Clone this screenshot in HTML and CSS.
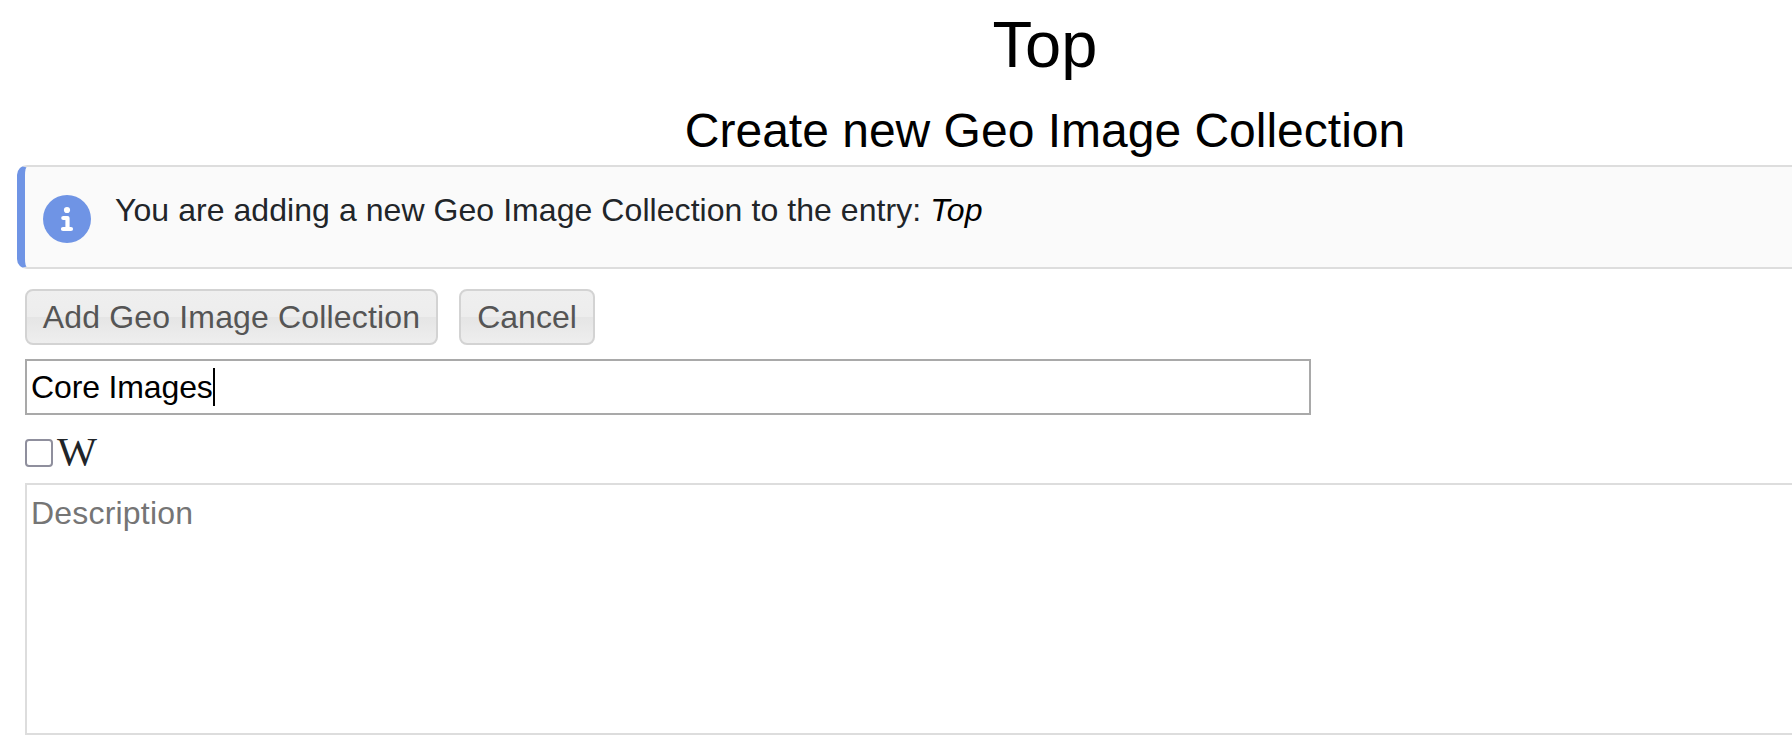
FILE: index.html
```
<!DOCTYPE html>
<html lang="en">
<head>
<meta charset="utf-8">
<title>Create new Geo Image Collection</title>
<link rel="stylesheet" href="styles.css">
</head>
<body>
<main class="page">
  <h1 class="title">Top</h1>
  <h2 class="subtitle">Create new Geo Image Collection</h2>
  <div class="message">
    <svg class="message-icon" viewBox="0 0 48 48" aria-hidden="true">
      <circle cx="24" cy="24" r="24" fill="#6f94e5"/>
      <circle cx="24" cy="15" r="3.1" fill="#fff"/>
      <path d="M20.3 23H24.5V34M20 34H28" fill="none" stroke="#fff" stroke-width="4.2" stroke-linecap="round" stroke-linejoin="round"/>
    </svg>
    <div class="message-text">You are adding a new Geo Image Collection to the entry: <i class="entry">Top</i></div>
  </div>
  <form class="form">
    <div class="buttons">
      <button class="button add" type="button">Add Geo Image Collection</button>
      <button class="button cancel" type="button">Cancel</button>
    </div>
    <div class="name-field"><span class="name-text">Core Images</span><span class="caret"></span></div>
    <label class="wiki"><span class="checkbox"></span><span class="wiki-mark">W</span></label>
    <div class="description">Description</div>
  </form>
</main>
</body>
</html>
```
FILE: styles.css
```
* { box-sizing: border-box; }
html { overflow: hidden; }
body {
  margin: 0;
  height: 750px;
  overflow: hidden;
  background: #fff;
  color: #212529;
  font-family: "Liberation Sans", Arial, sans-serif;
  font-size: 32px;
}
.page { margin-left: 17px; }
.title, .subtitle {
  margin: 0;
  padding-left: 281px;
  color: #000;
  font-weight: 400;
  text-align: center;
}
.title { font-size: 65px; line-height: 90px; height: 95px; }
.subtitle { font-size: 48px; line-height: 72px; height: 70px; }
.message {
  display: flex;
  align-items: flex-start;
  height: 104px;
  border: 2px solid #ddd;
  border-left: 8px solid #6f94e5;
  border-right: 0;
  border-radius: 10px 0 0 10px;
  background: #fafafa;
  padding: 28px 18px;
}
.message-icon { width: 48px; height: 48px; flex: none; }
.message-text {
  margin-left: 24px;
  line-height: 30px;
  letter-spacing: 0.06px;
  white-space: nowrap;
}
.entry { color: #000; }
.form { padding: 20px 0 0 8px; }
.buttons { display: flex; gap: 21px; }
.button {
  height: 56px;
  padding: 0;
  border: 2px solid #d3d3d3;
  border-radius: 8px;
  background: linear-gradient(#efefef 0, #ededed 50%, #e5e5e5 50%, #eee 100%);
  color: #555;
  font: inherit;
  white-space: nowrap;
}
.add { width: 413px; letter-spacing: 0.16px; }
.cancel { width: 136px; }
.name-field {
  display: flex;
  align-items: center;
  width: 1286px;
  height: 56px;
  margin-top: 14px;
  padding-left: 4px;
  border: 2px solid #a9a9a9;
  color: #000;
}
.name-text { letter-spacing: -0.14px; }
.caret { width: 2px; height: 38px; background: #000; }
.wiki { display: flex; align-items: center; height: 28px; margin-top: 24px; }
.checkbox {
  width: 28px;
  height: 28px;
  border: 2px solid #8f8f9d;
  border-radius: 4px;
}
.wiki-mark {
  margin-left: 4px;
  font-family: "Liberation Serif", "Times New Roman", serif;
  font-size: 40px;
  line-height: 28px;
  transform: translateY(-1px) scaleX(1.06);
  transform-origin: left center;
}
.description {
  height: 252px;
  margin-top: 16px;
  padding: 10px 4px;
  border: 2px solid #ddd;
  border-right: 0;
  color: #757575;
  line-height: 36px;
  letter-spacing: 0.2px;
}
```
